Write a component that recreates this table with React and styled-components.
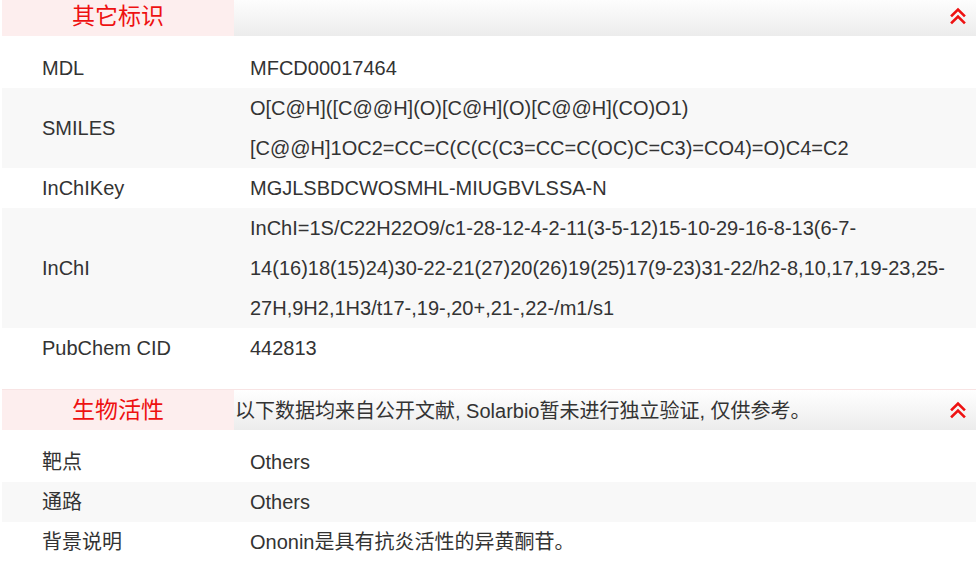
import React from "react";
import styled, { createGlobalStyle } from "styled-components";

const GlobalStyle = createGlobalStyle`
  html, body {
    margin: 0;
    padding: 0;
    background: #fff;
    overflow: hidden;
  }
  body {
    font-family: "Liberation Sans", Arial, "Noto Sans CJK SC", sans-serif;
    color: #333;
  }
`;

const Page = styled.div`
  width: 974px;
  padding-left: 2px;
  margin-top: -5px;
`;

const Section = styled.section`
  margin-bottom: 21px;
`;

const Head = styled.div`
  display: flex;
  align-items: center;
  height: 40px;
  border-top: 1px solid #f8e4e4;
  background: linear-gradient(to bottom, #ffffff 0%, #ececec 100%);
`;

const Tab = styled.h3`
  margin: 0;
  flex: 0 0 232px;
  height: 100%;
  padding-bottom: 4px;
  box-sizing: border-box;
  display: flex;
  align-items: center;
  justify-content: center;
  background: #fdeeee;
  color: #ee1111;
  font-size: 23px;
  font-weight: normal;
  font-family: "Noto Sans CJK SC", sans-serif;
`;

const Notice = styled.span`
  flex: 1;
  padding-left: 1px;
  padding-bottom: 2px;
  font-size: 20px;
  color: #333;
`;

const Toggle = styled.button`
  margin-left: auto;
  margin-right: 8px;
  width: 20px;
  height: 20px;
  padding: 0;
  border: 0;
  background: transparent;
  display: flex;
  align-items: center;
  justify-content: center;
  cursor: pointer;
`;

const Table = styled.div`
  margin-top: 12px;
`;

const Row = styled.div`
  display: flex;
  align-items: center;
  background: ${(p) => (p.$striped ? "#f8f8f8" : "#fff")};
  font-size: 20px;
  line-height: 40px;
`;

const Label = styled.div`
  flex: 0 0 208px;
  padding-left: 40px;
`;

const Value = styled.div`
  flex: 1;
  min-width: 0;
  padding-right: 22px;
`;

function Chevrons() {
  return (
    <svg width="18" height="18" viewBox="0 0 18 18" fill="none" stroke="#ee1111" strokeWidth="2.6" strokeLinecap="square">
      <polyline points="3,8.5 9,2.5 15,8.5" />
      <polyline points="3,15.5 9,9.5 15,15.5" />
    </svg>
  );
}

const ids = [
  ["MDL", "MFCD00017464"],
  ["SMILES", "O[C@H]([C@@H](O)[C@H](O)[C@@H](CO)O1)[C@@H]1OC2=CC=C(C(C(C3=CC=C(OC)C=C3)=CO4)=O)C4=C2"],
  ["InChIKey", "MGJLSBDCWOSMHL-MIUGBVLSSA-N"],
  ["InChI", "InChI=1S/C22H22O9/c1-28-12-4-2-11(3-5-12)15-10-29-16-8-13(6-7-14(16)18(15)24)30-22-21(27)20(26)19(25)17(9-23)31-22/h2-8,10,17,19-23,25-27H,9H2,1H3/t17-,19-,20+,21-,22-/m1/s1"],
  ["PubChem CID", "442813"],
];

const bio = [
  ["靶点", "Others"],
  ["通路", "Others"],
  ["背景说明", "Ononin是具有抗炎活性的异黄酮苷。"],
];

function InfoTable({ rows }) {
  return (
    <Table>
      {rows.map(([k, v], i) => (
        <Row key={k} $striped={i % 2 === 1}>
          <Label>{k}</Label>
          <Value>{v}</Value>
        </Row>
      ))}
    </Table>
  );
}

export default function App() {
  return (
    <Page>
      <GlobalStyle />
      <Section>
        <Head>
          <Tab>其它标识</Tab>
          <Toggle aria-label="收起"><Chevrons /></Toggle>
        </Head>
        <InfoTable rows={ids} />
      </Section>
      <Section>
        <Head>
          <Tab>生物活性</Tab>
          <Notice>以下数据均来自公开文献, Solarbio暂未进行独立验证, 仅供参考。</Notice>
          <Toggle aria-label="收起"><Chevrons /></Toggle>
        </Head>
        <InfoTable rows={bio} />
      </Section>
    </Page>
  );
}
